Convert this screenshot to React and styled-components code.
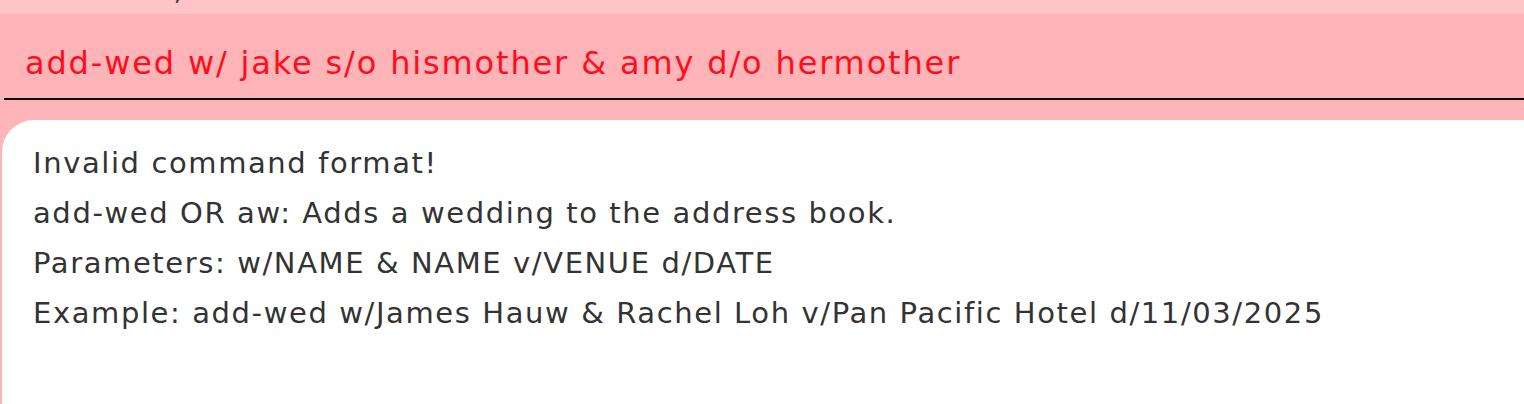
import React from "react";
import styled, { createGlobalStyle } from "styled-components";

const GlobalStyle = createGlobalStyle`
  html, body { margin: 0; padding: 0; }
  body { background: #ffb4b8; overflow: hidden; }
`;

const Page = styled.div`
  width: 1524px;
  height: 404px;
  overflow: hidden;
  background: #ffb4b8;
  display: flex;
  flex-direction: column;
  font-family: "DejaVu Sans", "Open Sans", sans-serif;
`;

const StatusStrip = styled.div`
  height: 14px;
  flex: none;
  background: #ffc3c8;
  overflow: hidden;
  position: relative;
`;

const StatusText = styled.span`
  position: absolute;
  left: 174px;
  bottom: 10px;
  font-size: 24px;
  color: #333;
  line-height: 1;
`;

const CommandBox = styled.div`
  height: 86px;
  flex: none;
  margin-left: 4px;
  padding: 29px 0 0 21px;
  border-bottom: 2px solid #000;
  display: flex;
  align-items: flex-start;
  box-sizing: border-box;
`;

const CommandText = styled.span`
  font-size: 32px;
  line-height: 40px;
  letter-spacing: 1.85px;
  color: #ff0d1e;
  white-space: nowrap;
`;

const Gap = styled.div`
  height: 20px;
  flex: none;
`;

const ResultPanel = styled.div`
  flex: 1;
  margin-left: 2px;
  background: #ffffff;
  border-top-left-radius: 32px;
  padding: 18px 0 0 31px;
  display: flex;
  flex-direction: column;
`;

const ResultLine = styled.div`
  height: 50px;
  line-height: 50px;
  font-size: 29px;
  letter-spacing: 1.6px;
  color: #333333;
  white-space: nowrap;
`;

const lines = [
  "Invalid command format!",
  "add-wed OR aw: Adds a wedding to the address book.",
  "Parameters: w/NAME & NAME v/VENUE d/DATE",
  "Example: add-wed w/James Hauw & Rachel Loh v/Pan Pacific Hotel d/11/03/2025",
];

export default function App() {
  return (
    <>
      <GlobalStyle />
      <Page>
        <StatusStrip>
          <StatusText>,</StatusText>
        </StatusStrip>
        <CommandBox>
          <CommandText>add-wed w/ jake s/o hismother &amp; amy d/o hermother</CommandText>
        </CommandBox>
        <Gap />
        <ResultPanel>
          {lines.map((l) => (
            <ResultLine key={l}>{l}</ResultLine>
          ))}
        </ResultPanel>
      </Page>
    </>
  );
}
